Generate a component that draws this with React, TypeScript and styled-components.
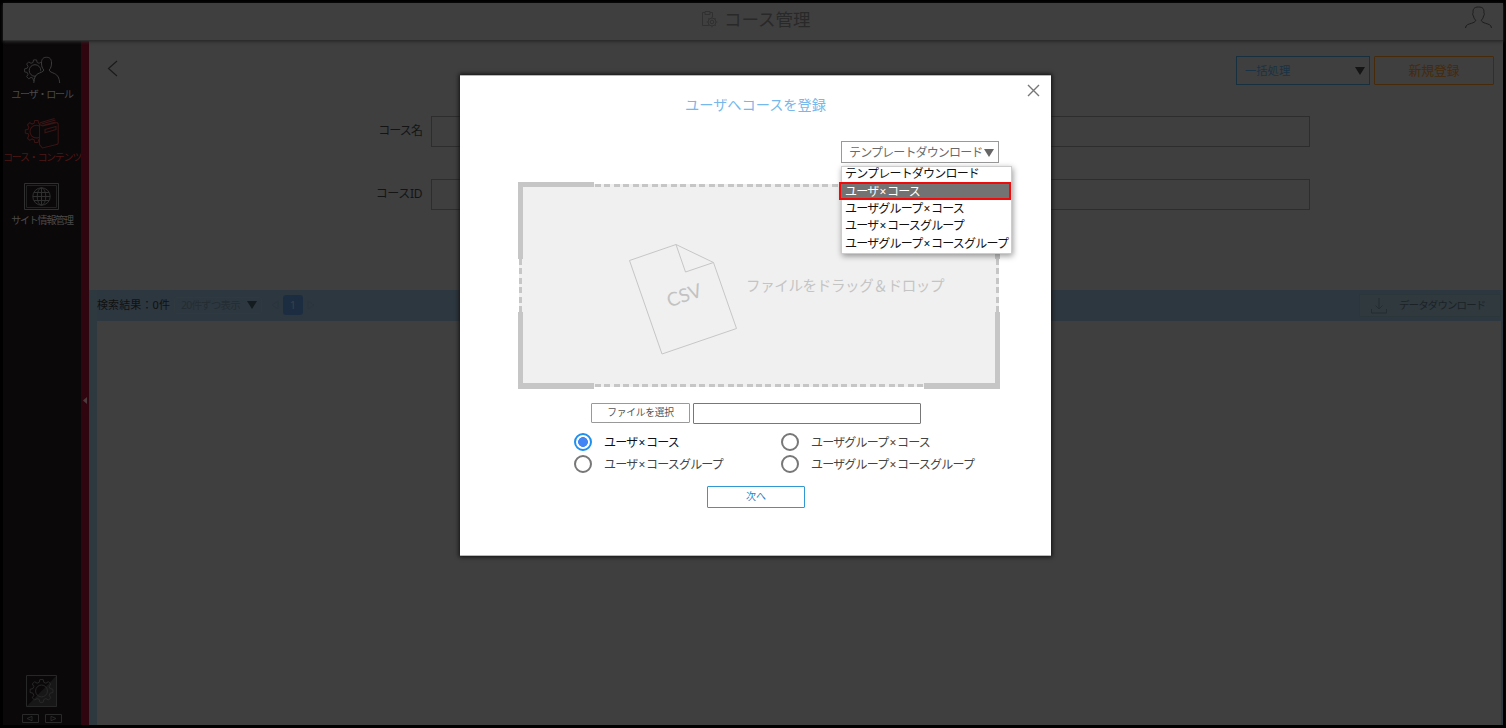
import React from "react";
import styled, { createGlobalStyle } from "styled-components";

const Global = createGlobalStyle`
  *, *::before, *::after { box-sizing: border-box; }
  html, body { margin: 0; padding: 0; }
  body { background: #000; overflow: hidden; font-family: "Noto Sans", "Noto Sans CJK JP", sans-serif; }
  button, input { font-family: inherit; margin: 0; }
  svg { display: block; flex: none; }
`;

const Label = styled.span<{ $size: number; $spacing?: number; $color?: string }>`
  display: block;
  font-family: "Noto Sans", "Noto Sans CJK JP", sans-serif;
  font-size: ${(p) => p.$size}px;
  line-height: 14px;
  letter-spacing: ${(p) => p.$spacing ?? 0}px;
  color: ${(p) => p.$color ?? "inherit"};
  white-space: nowrap;
`;

const Times = styled.span`
  padding: 0 1.5px 0 1px;
`;

const Screen = styled.div`
  width: 1506px;
  height: 728px;
  border: 3px solid #000;
  background: #3f3f3f;
  display: flex;
  flex-direction: column;
  position: relative;
`;

const Header = styled.header`
  height: 38px;
  flex: none;
  display: flex;
  align-items: center;
  justify-content: space-between;
  padding: 0 11px 6px 698px;
  border-bottom: 1px solid #2c2c2c;
  box-shadow: 0 1px 3px #2a2a2a;
  z-index: 1;
`;

const Heading = styled.div`
  display: flex;
  align-items: center;
  gap: 6px;
`;

const AccountSlot = styled.div`
  padding-bottom: 3px;
`;

const Body = styled.div`
  flex: 1;
  display: flex;
  min-height: 0;
`;

const Sidebar = styled.nav`
  width: 78px;
  background: #0a0809;
  display: flex;
  flex-direction: column;
  align-items: center;
  padding-top: 14px;
`;

const NavItem = styled.div<{ $height: number; $gap: number }>`
  height: ${(p) => p.$height}px;
  display: flex;
  flex-direction: column;
  align-items: center;
  gap: ${(p) => p.$gap}px;
  flex: none;
`;

const SidebarFoot = styled.div`
  margin-top: auto;
  padding: 0 1px 2px 0;
  display: flex;
  flex-direction: column;
  align-items: center;
  gap: 7px;
`;

const PagerRow = styled.div`
  display: flex;
  gap: 6px;
`;

const Rail = styled.div`
  width: 8px;
  background: #2f0610;
  display: flex;
  align-items: center;
  justify-content: center;
  padding-top: 34px;
`;

const Main = styled.main`
  flex: 1;
  display: flex;
  flex-direction: column;
  min-width: 0;
`;

const SearchArea = styled.section`
  height: 249px;
  flex: none;
  display: flex;
  flex-direction: column;
`;

const ActionRow = styled.div`
  display: flex;
  align-items: flex-start;
  padding: 15px 9px 0 18px;
  height: 75px;
`;

const Actions = styled.div`
  display: flex;
  gap: 4px;
  margin-left: auto;
`;

const BulkSelect = styled.div`
  width: 134px;
  height: 29px;
  border: 1px solid #17303f;
  color: #193244;
  display: flex;
  align-items: center;
  justify-content: space-between;
  padding: 1px 4px 0 8px;
`;

const CreateButton = styled.button`
  width: 120px;
  height: 29px;
  border: 1px solid #472a09;
  border-radius: 1px;
  background: transparent;
  color: #472a09;
  padding: 0 0 2px;
  display: flex;
  align-items: center;
  justify-content: center;
`;

const FieldRow = styled.div`
  height: 63px;
  display: flex;
  align-items: flex-start;
`;

const FieldLabel = styled.div`
  width: 342px;
  padding: 8px 9px 0 0;
  text-align: right;
`;

const Field = styled.div`
  width: 879px;
  height: 31px;
  border: 1px solid #2d2d2d;
`;

const Results = styled.section`
  flex: 1;
  display: flex;
  flex-direction: column;
  border-left: 8px solid #2d383f;
  border-right: 2px solid #2d383f;
`;

const ResultBar = styled.div`
  height: 31px;
  background: #2d373f;
  display: flex;
  align-items: center;
  padding-bottom: 1px;
`;

const ResultCount = styled.div`
  width: 74px;
`;

const PageSize = styled.div`
  margin-left: 3px;
  width: 88px;
  height: 17px;
  border: 1px solid #30393e;
  border-radius: 3px;
  display: flex;
  align-items: center;
  justify-content: space-between;
  padding: 0 4px 0 6px;
`;

const Pager = styled.div`
  display: flex;
  align-items: center;
  gap: 4px;
  margin-left: 9px;
`;

const PageNumber = styled.div`
  width: 20px;
  height: 20px;
  border-radius: 3px;
  background: #1d2d41;
  color: #35414b;
  font-size: 11px;
  line-height: 20px;
  text-align: center;
`;

const DownloadButton = styled.div`
  margin-left: auto;
  width: 142px;
  height: 23px;
  border: 1px solid #2b363a;
  background: #2f393e;
  display: flex;
  align-items: center;
  padding-left: 11px;
  gap: 12px;
`;

const Modal = styled.div`
  position: absolute;
  left: 457px;
  top: 72px;
  width: 591px;
  height: 481px;
  background: #fff;
  border: 1px solid #b8b8b8;
  border-width: 1px 0;
  box-shadow: 0 0 4px 1px #111;
  display: flex;
  flex-direction: column;
  z-index: 2;
`;

const ModalTop = styled.div`
  height: 65px;
  display: grid;
  grid-template-columns: 1fr auto 1fr;
`;

const ModalTitle = styled.div`
  padding-top: 22px;
`;

const CloseButton = styled.div`
  justify-self: end;
  padding: 8px 11px 0 0;
  height: 30px;
`;

const TemplateSelect = styled.div`
  position: relative;
  margin-left: 381px;
  width: 158px;
  height: 22px;
  border: 1px solid #999;
  color: #6a6a6a;
  display: flex;
  align-items: center;
  justify-content: space-between;
  padding: 1px 4px 0 7px;
  flex: none;
`;

const Menu = styled.div`
  position: absolute;
  top: 24px;
  left: -1px;
  width: 171px;
  height: 88px;
  background: #fff;
  border: 1px solid #ccc;
  box-shadow: 1px 2px 6px rgba(0, 0, 0, 0.4);
  display: flex;
  flex-direction: column;
  z-index: 3;
`;

const MenuItem = styled.div<{ $active?: boolean }>`
  height: ${(p) => (p.$active ? 18 : 17.3)}px;
  flex: none;
  display: flex;
  align-items: center;
  padding: ${(p) => (p.$active ? "1px 0 0 4px" : "0 0 0 3px")};
  margin: ${(p) => (p.$active ? "-2px 0 0 -3px" : "0")};
  width: ${(p) => (p.$active ? "172px" : "auto")};
  border: ${(p) => (p.$active ? "2px solid #f00a0a" : "0")};
  background: ${(p) => (p.$active ? "#737373" : "transparent")};
  color: ${(p) => (p.$active ? "#fff" : "#111")};

  &:first-child { padding-bottom: 3px; }
`;

const grey = "#c6c6c6";
const solid = `linear-gradient(${grey}, ${grey})`;
const dashX = `repeating-linear-gradient(90deg, ${grey} 0 6px, #f0f0f0 6px 9.47px)`;
const dashY = `repeating-linear-gradient(180deg, ${grey} 0 6px, #f0f0f0 6px 9.47px)`;

const DropZone = styled.div`
  margin: 19px 0 0 58px;
  width: 482px;
  height: 207px;
  flex: none;
  background:
    ${solid} 0 0 / 76px 5px no-repeat,
    ${solid} 0 0 / 5px 77px no-repeat,
    ${solid} 100% 0 / 76px 5px no-repeat,
    ${solid} 100% 0 / 5px 77px no-repeat,
    ${solid} 0 100% / 76px 6px no-repeat,
    ${solid} 0 100% / 5px 77px no-repeat,
    ${solid} 100% 100% / 76px 6px no-repeat,
    ${solid} 100% 100% / 5px 77px no-repeat,
    ${dashX} 77px 2px / 329px 3px no-repeat,
    ${dashX} 77px 202px / 329px 3px no-repeat,
    ${dashY} 1px 77px / 3px 53px no-repeat,
    ${dashY} 478px 77px / 3px 53px no-repeat,
    linear-gradient(#f0f0f0, #f0f0f0) 1px 2px / 480px 203px no-repeat;
  display: flex;
  padding: 61px 0 0 110px;
  align-items: flex-start;
`;

const DropText = styled.div`
  padding: 35px 0 0 9px;
`;

const FileRow = styled.div`
  display: flex;
  align-items: center;
  gap: 3px;
  margin: 13px 0 0 131px;
  height: 22px;
`;

const FileButton = styled.button`
  width: 99px;
  height: 20px;
  border: 1px solid #999;
  border-radius: 1px;
  background: #fff;
  color: #555;
  padding: 0;
  display: flex;
  align-items: center;
  justify-content: center;
`;

const FileName = styled.div`
  width: 228px;
  height: 21px;
  border: 1px solid #777;
  border-radius: 1px;
`;

const Options = styled.div`
  display: grid;
  grid-template-columns: 207px 207px;
  grid-auto-rows: 22px;
  margin: 7px 0 0 114px;
`;

const Option = styled.div<{ $on?: boolean }>`
  display: flex;
  align-items: center;
  gap: 12px;
  color: ${(p) => (p.$on ? "#111" : "#444")};

  ${Label} { padding-top: 2px; }
`;

const Radio = styled.span<{ $on?: boolean }>`
  width: 18px;
  height: 18px;
  flex: none;
  border-radius: 50%;
  border: 2px solid ${(p) => (p.$on ? "#1e90ee" : "#777")};
  background: ${(p) => (p.$on ? "radial-gradient(circle, #4285f4 4.6px, #fff 5.2px)" : "#fff")};
`;

const NextButton = styled.button`
  width: 98px;
  height: 22px;
  margin: 11px 0 0 247px;
  border: 1px solid #3198d3;
  border-radius: 1px;
  background: #fff;
  color: #1c87c9;
  padding: 0 0 2px;
  display: flex;
  align-items: center;
  justify-content: center;
`;

const Triangle = ({ w, h, color }: { w: number; h: number; color: string }) => (
  <svg width={w} height={h} viewBox="0 0 10 8" preserveAspectRatio="none">
    <path d="M0 0H10L5 8Z" fill={color} />
  </svg>
);

const gearPath = "M10.3 1h3.4l.7 3 2.2.9 2.6-1.6 2.4 2.4L20 8.300l.9 2.200 3 .7v3.400l-3 .7-.9 2.200 1.600 2.600-2.400 2.400-2.600-1.600-2.200.9-.7 3h-3.400l-.7-3-2.200-.9-2.600 1.600-2.400-2.400L4 17.500l-.9-2.200-3-.7v-3.400l3-.7L4 8.300 2.400 5.700l2.400-2.400L7.400 4.900 9.600 4Z";

const UserRoleIcon = () => (
  <svg width="38" height="30" viewBox="0 0 38 30" fill="none" stroke="#3c3c3c" strokeWidth="1">
    <clipPath id="gearBehindUser">
      <path d="M0 0H17.500L18 9.500 20 14.500 15 18 12 22 10.500 30H0Z" />
    </clipPath>
    <g clipPath="url(#gearBehindUser)">
      <path d={gearPath} transform="translate(1.500 4) scale(.88)" />
      <circle cx="12" cy="15.500" r="5.800" />
    </g>
    <path d="M10.800 28c.4-5 1.500-8 4.200-9.300 2.500-1.300 5.600-1.800 5.800-3.700-1.600-1.700-2.300-4-2.300-7 0-4 1.700-5.700 5-5.700s5 1.700 5 5.700c0 3-.7 5.300-2.300 7 .2 1.900 3 2.400 5.500 3.700 3 1.500 4.500 4 5 9.300" />
  </svg>
);

const CourseIcon = () => (
  <svg width="36" height="32" viewBox="0 0 36 32" fill="none" stroke="#3a1414" strokeWidth="1.100">
    <clipPath id="gearBehindBook"><path d="M0 0H15V32H0Z" /></clipPath>
    <g clipPath="url(#gearBehindBook)">
      <path d={gearPath} transform="translate(1.200 2.500) scale(.93)" />
      <circle cx="12.300" cy="14.600" r="6.300" />
    </g>
    <path d="M15.500 7.500v20l3 3.500 14-3.500c1 0 1.700-.8 1.700-1.700V7.500c0-1.300-1-2-2-1.800L18.500 9l-3-1.500Zm0 0c0-1 .6-1.700 1.500-2L30.500 1.500M17.500 7l14-4M18.500 8.500l13-3.500" />
    <path d="M21 12.500l11-3v3l-11 3.200Z" />
  </svg>
);

const SiteIcon = () => (
  <svg width="35" height="27" viewBox="0 0 35 27" fill="none" stroke="#303030">
    <path d="M.5.5h34v26H.5Z" strokeWidth="1" />
    <path d="M2.500 2.500h30v22h-30Z" strokeWidth="1" stroke="#222" />
    <circle cx="17.500" cy="13.500" r="8.700" />
    <ellipse cx="17.500" cy="13.500" rx="4.300" ry="8.700" />
    <path d="M17.500 4.800v17.400M8.800 13.500h17.400M10 9.500h15M10 17.500h15" />
  </svg>
);

const SettingsIcon = () => (
  <svg width="31" height="32" viewBox="0 0 31 32">
    <path d="M31 0V32H0Z" fill="#171717" />
    <path d="M.5.5h30v31H.5Z" fill="none" stroke="#272727" />
    <g fill="none" stroke="#292929" transform="translate(4 3.500) scale(.96)">
      <path d={gearPath} />
      <circle cx="12" cy="13" r="6.200" />
    </g>
  </svg>
);

const StepBox = ({ flip }: { flip?: boolean }) => (
  <svg width="17" height="9" viewBox="0 0 17 9" fill="none" stroke="#292929">
    <path d="M.5.5h16v8H.5Z" />
    <path d={flip ? "M6 2.300v4.400l5-2.200Z" : "M10 2.300v4.400L5 4.500Z"} />
  </svg>
);

const CsvFile = () => (
  <svg width="109" height="112" viewBox="0 0 109 112" fill="none" stroke="#c6c6c6" strokeWidth="1">
    <path d="M1.500 17.500 48 1.500 85.500 19.500 108.500 85.500 34 111Z M48 1.500 57.500 29 85.500 19.500" />
    <text x="56" y="59" transform="rotate(-19 56 52)" textAnchor="middle" fill="#c2c2c2" stroke="none" fontFamily="Lato" fontSize="19">CSV</text>
  </svg>
);

const PairName = ({ text }: { text: string }) => {
  const [left, right] = text.split("×");
  return (
    <Label $size={12} $spacing={-0.8}>
      {left}
      {right && <><Times>×</Times>{right}</>}
    </Label>
  );
};

const options = ["ユーザ×コース", "ユーザグループ×コース", "ユーザ×コースグループ", "ユーザグループ×コースグループ"];

export default function App() {
  return (
    <>
      <Global />
      <Screen>
        <Header>
          <Heading>
            <svg width="17" height="18" viewBox="0 0 17 18" fill="none" stroke="#303030">
              <path d="M7 15.500H1.500v-13H4M9 2.500h2.500V7M4 1.500h5v3H4Z" />
              <circle cx="11" cy="12" r="4" />
              <circle cx="11" cy="12" r="1.800" />
              <path d="M11 6.800V8M11 16v1.300M5.800 12H7M15 12h1.300M7.400 8.400l.8.8M14 15l.8.8M14.600 8.400l-.8.800M8 15l-.8.800" />
            </svg>
            <Label $size={17.5} $color="#292929">コース管理</Label>
          </Heading>
          <AccountSlot>
            <svg width="27" height="23" viewBox="0 0 27 23" fill="none" stroke="#1d1d1d">
              <path d="M.5 22c.3-3.500 3-3.700 6-4.700 2-.7 3.800-1.300 4.200-3-1.300-1.500-2-2.500-2.200-4.300-1-1-1-2.500-.4-3.200C7.800 3 9 1 13.500 1s5.700 2 5.400 5.800c.6.700.6 2.200-.4 3.200-.2 1.800-.9 2.800-2.200 4.300.4 1.700 2.200 2.300 4.200 3 3 1 5.700 1.200 6 4.700" />
            </svg>
          </AccountSlot>
        </Header>
        <Body>
          <Sidebar>
            <NavItem $height={62} $gap={2}>
              <UserRoleIcon />
              <Label $size={10} $spacing={-1.2} $color="#4a4a4a">ユーザ・ロール</Label>
            </NavItem>
            <NavItem $height={66} $gap={1}>
              <CourseIcon />
              <Label $size={10} $spacing={-1.3} $color="#4e1717">コース・コンテンツ</Label>
            </NavItem>
            <NavItem $height={60} $gap={3}>
              <SiteIcon />
              <Label $size={10} $spacing={-1.2} $color="#4a4a4a">サイト情報管理</Label>
            </NavItem>
            <SidebarFoot>
              <SettingsIcon />
              <PagerRow>
                <StepBox />
                <StepBox flip />
              </PagerRow>
            </SidebarFoot>
          </Sidebar>
          <Rail>
            <svg width="4" height="7" viewBox="0 0 4 7"><path d="M4 0v7L0 3.500Z" fill="#4b3b3e" /></svg>
          </Rail>
          <Main>
            <SearchArea>
              <ActionRow>
                <svg width="12" height="25" viewBox="0 0 12 25" fill="none" stroke="#1b1b1b" strokeWidth="1.200">
                  <path d="M10 5 1.500 12.500 10 20" />
                </svg>
                <Actions>
                  <BulkSelect>
                    <Label $size={11.3}>一括処理</Label>
                    <Triangle w={10} h={8} color="#151515" />
                  </BulkSelect>
                  <CreateButton><Label $size={12.8}>新規登録</Label></CreateButton>
                </Actions>
              </ActionRow>
              <FieldRow>
                <FieldLabel><Label $size={12} $spacing={-0.9} $color="#141414">コース名</Label></FieldLabel>
                <Field />
              </FieldRow>
              <FieldRow>
                <FieldLabel><Label $size={12} $spacing={-0.4} $color="#141414">コースID</Label></FieldLabel>
                <Field />
              </FieldRow>
            </SearchArea>
            <Results>
              <ResultBar>
                <ResultCount><Label $size={11} $spacing={0.1} $color="#111">検索結果：0件</Label></ResultCount>
                <PageSize>
                  <Label $size={10.5} $spacing={-0.8} $color="#242d32">20件ずつ表示</Label>
                  <Triangle w={10} h={8} color="#151c20" />
                </PageSize>
                <Pager>
                  <svg width="8" height="10" viewBox="0 0 8 10"><path d="M7 1v8L1 5Z" fill="none" stroke="#29343c" /></svg>
                  <PageNumber>1</PageNumber>
                  <svg width="8" height="10" viewBox="0 0 8 10"><path d="M1 1v8l6-4Z" fill="none" stroke="#29343c" /></svg>
                </Pager>
                <DownloadButton>
                  <svg width="16" height="17" viewBox="0 0 16 17" fill="none" stroke="#242d31">
                    <path d="M8 1v11M4.500 8.500 8 12l3.500-3.500M.5 12v4h15v-4" />
                  </svg>
                  <Label $size={10.5} $spacing={-0.9} $color="#1b2327">データダウンロード</Label>
                </DownloadButton>
              </ResultBar>
            </Results>
          </Main>
        </Body>
        <Modal>
          <ModalTop>
            <span />
            <ModalTitle><Label $size={14.2} $color="#76b8ec">ユーザへコースを登録</Label></ModalTitle>
            <CloseButton>
              <svg width="13" height="13" viewBox="0 0 13 13" stroke="#777" strokeWidth="1.400"><path d="M1 1 12 12M12 1 1 12" /></svg>
            </CloseButton>
          </ModalTop>
          <TemplateSelect>
            <Label $size={12} $spacing={-0.85}>テンプレートダウンロード</Label>
            <Triangle w={10} h={8} color="#666" />
            <Menu>
              {["テンプレートダウンロード", ...options].map((text, i) => (
                <MenuItem key={text} $active={i === 1}>
                  <PairName text={text} />
                </MenuItem>
              ))}
            </Menu>
          </TemplateSelect>
          <DropZone>
            <CsvFile />
            <DropText>
              <Label $size={14.5} $spacing={-0.35} $color="#c4c4c4">ファイルをドラッグ＆ドロップ</Label>
            </DropText>
          </DropZone>
          <FileRow>
            <FileButton><Label $size={9.8} $spacing={-0.3}>ファイルを選択</Label></FileButton>
            <FileName />
          </FileRow>
          <Options>
            {options.map((text, i) => (
              <Option key={text} $on={i === 0}>
                <Radio $on={i === 0} />
                <PairName text={text} />
              </Option>
            ))}
          </Options>
          <NextButton><Label $size={10}>次へ</Label></NextButton>
        </Modal>
      </Screen>
    </>
  );
}
